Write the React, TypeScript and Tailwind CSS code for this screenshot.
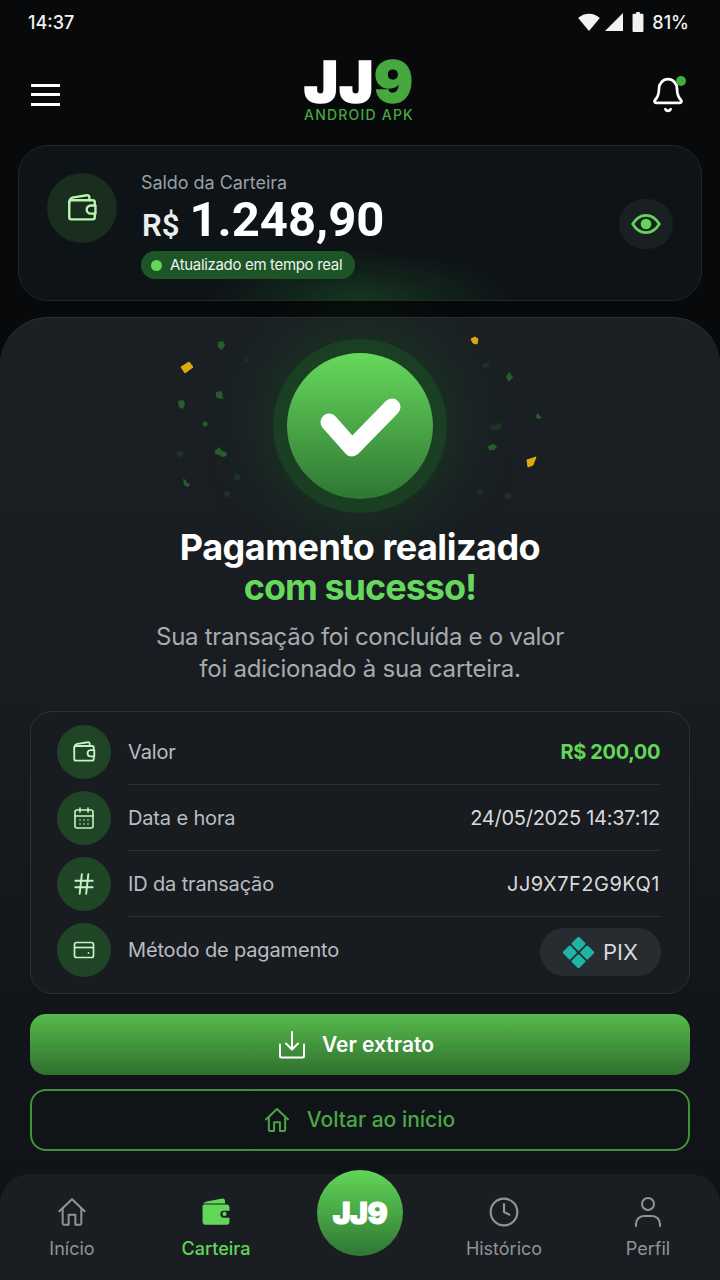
import { Bell, CalendarDays, Clock, Hash } from "lucide-react";
import type { ReactNode } from "react";

const WalletIcon = ({ className, filled }: { className: string; filled?: boolean }) => (
  <svg viewBox="0 0 24 24" className={className} fill="none" stroke="currentColor" strokeWidth={1.7} strokeLinejoin="round" strokeLinecap="round">
    {filled ? (
      <>
        <path d="M3 7C3 5.600 4 5 5.500 4.600L16.500 2.400c1-.1 1.700.4 1.800 1.400l.2 2.200H3z" fill="currentColor" stroke="none" />
        <path d="M2.500 8c0-.8.6-1.300 1.400-1.300h15.700c1 0 1.900.8 1.900 1.900v2.600h-4a2.400 2.400 0 0 0 0 4.800h4v3.100c0 1-.9 1.900-1.900 1.900H4.400c-1 0-1.900-.9-1.900-1.900z" fill="currentColor" stroke="none" />
        <circle cx="18" cy="13.400" r="1.500" fill="currentColor" stroke="none" />
      </>
    ) : (
      <>
        <path d="M3 8v10.500c0 1 .6 1.500 1.500 1.500h15c1 0 1.500-.6 1.500-1.500V16" />
        <path d="M3 8c0-1 .6-1.500 1.500-1.500h15c1 0 1.500.6 1.500 1.500v2.200" />
        <path d="M3.400 6.400C4 5 5 4.800 6 4.500L15.500 3c1-.2 1.700.4 1.700 1.400v2" />
        <path d="M21.500 10.200h-3.300a2.900 2.900 0 0 0 0 5.800h3.300z" />
      </>
    )}
  </svg>
);

const HomeIcon = ({ className, strokeWidth = 1.7 }: { className: string; strokeWidth?: number }) => (
  <svg viewBox="0 0 24 24" className={className} fill="none" stroke="currentColor" strokeWidth={strokeWidth} strokeLinejoin="round" strokeLinecap="round">
    <path d="M2.500 11.500 12 2.500l9.500 9" />
    <path d="M5 9.500V20.500c0 .6.4 1 1 1h3.500v-7.500h5v7.500H18c.6 0 1-.4 1-1V9.500" />
  </svg>
);

const TrayDownIcon = () => (
  <svg viewBox="0 0 28 30" className="h-[30px] w-[28px]" fill="none" stroke="currentColor" strokeWidth={2} strokeLinejoin="round" strokeLinecap="round">
    <path d="M14 2v17" />
    <path d="M8 13.500 14 19.500l6-6" />
    <path d="M2 14.500V26c0 .8.7 1.500 1.500 1.500h21c.8 0 1.500-.7 1.500-1.500V14.500" />
  </svg>
);

const PersonIcon = () => (
  <svg viewBox="0 0 28 32" className="h-[32px] w-[28px]" fill="none" stroke="currentColor" strokeWidth={2} strokeLinecap="round">
    <circle cx="14" cy="8" r="6" />
    <path d="M2 30v-2c0-4.500 3.500-8 8-8h8c4.500 0 8 3.500 8 8v2" />
  </svg>
);

const CardIcon = () => (
  <svg viewBox="0 0 24 24" className="h-[24px] w-[24px]" fill="none" stroke="currentColor" strokeWidth={1.7}>
    <rect x="2.500" y="4.500" width="19" height="15" rx="2" />
    <path d="M2.500 9.500h19" />
    <circle cx="16.500" cy="15" r="0.9" fill="currentColor" stroke="none" />
  </svg>
);

const PixIcon = () => (
  <svg viewBox="0 0 32 32" className="h-[31px] w-[31px]" fill="#1fb5a6">
    <rect x="10.500" y="1.500" width="11" height="11" rx="1.500" transform="rotate(45 16 7)" />
    <rect x="10.500" y="19.500" width="11" height="11" rx="1.500" transform="rotate(45 16 25)" />
    <rect x="1.500" y="10.500" width="11" height="11" rx="1.500" transform="rotate(45 7 16)" />
    <rect x="19.500" y="10.500" width="11" height="11" rx="1.500" transform="rotate(45 25 16)" />
  </svg>
);

// coordinates are page pixels, hence the viewBox offset
const Confetti = () => (
  <svg viewBox="0 317 720 200" className="absolute left-0 top-0 h-[200px] w-[720px]">
    <g fill="#e0a90f" strokeLinejoin="round" stroke="#e0a90f" strokeWidth={1}>
      <path d="M181 366l8-5 4 5-8 6z" />
      <path d="M471 338l4-2 3 2-1 5-4-1z" />
      <path d="M527 459l9-3-3 8-5 2z" />
    </g>
    <g fill="#2f8a32" opacity="0.6" className="blur-[0.7px]">
      <path d="M218 341l5-1 2 4-3 5-4-3z" />
      <path d="M216 391l5-1 2 4-1 2 3 1-5 1-4-2z" />
      <path d="M178 400l5-1 2 4-2 5-4-2z" />
      <circle cx="205" cy="423" r="2.500" />
      <path d="M215 450l4-4 3 4 4 1 1 4-5 1-3-2-4-1z" />
      <path d="M183 478l3 1 1 3 3 1-2 3-4-2z" />
      <path d="M509 371l4 5-4 5-3-5z" />
      <path d="M537 412l5 5-3 1-3-1z" />
      <path d="M488 445l6-2 3 3-3 3-5 0z" />
    </g>
    <g fill="#2f8a32" opacity="0.25" className="blur-[1px]">
      <path d="M490 425l8-1 2-4 1 6-3 3-7-1z" />
      <path d="M481 365l7-3 2 1-4 4z" />
      <circle cx="227" cy="493" r="3" />
      <circle cx="237" cy="476" r="3" />
      <circle cx="180" cy="453" r="3" />
      <circle cx="247" cy="359" r="2" />
      <circle cx="508" cy="495" r="3" />
      <circle cx="480" cy="491" r="2.500" />
    </g>
  </svg>
);

const Row = ({ icon, label, children, last }: { icon: ReactNode; label: string; children: ReactNode; last?: boolean }) => (
  <div className="flex h-[66px] items-center">
    <div className="flex h-[54px] w-[54px] shrink-0 items-center justify-center rounded-full bg-[#1f4426] text-[#c9f2c4]">{icon}</div>
    <div className={`ml-[17px] flex h-full flex-1 items-center justify-between ${last ? "" : "border-b border-[#2c3136]"}`}>
      <span className="text-[20px] tracking-[-0.15px] text-[#b9bdc0]">{label}</span>
      {children}
    </div>
  </div>
);

const NavItem = ({ icon, label, active }: { icon: ReactNode; label: string; active?: boolean }) => (
  <div className={`flex flex-col items-center pt-[19px] ${active ? "text-[#62d658]" : "text-[#8f9497]"}`}>
    <div className="flex h-[38px] items-center">{icon}</div>
    <span className={`mt-[6px] text-[18px] leading-[24px] ${active ? "font-medium" : ""}`}>{label}</span>
  </div>
);

export default function App() {
  return (
    <div className="flex h-[1280px] w-[720px] flex-col overflow-hidden bg-[#07090b] font-['Inter',sans-serif] text-white">
      {/* status bar */}
      <div className="flex h-[44px] shrink-0 items-center justify-between pl-[28px] pr-[31px] text-[18px] font-medium text-[#f2f2f2]">
        <span>14:37</span>
        <div className="flex items-center gap-[5px]">
          <svg viewBox="0 0 24 20" className="h-[18px] w-[22px]" fill="currentColor">
            <path d="M0 5.500C6.800-.8 17.200-.8 24 5.500L12 20z" />
          </svg>
          <svg viewBox="0 0 20 20" className="h-[18px] w-[18px]" fill="currentColor">
            <path d="M20 0v20H0z" />
          </svg>
          <svg viewBox="0 0 12 22" className="ml-[4px] h-[20px] w-[12px]" fill="currentColor">
            <path d="M4 0h4v2h3a1 1 0 0 1 1 1v18a1 1 0 0 1-1 1H1a1 1 0 0 1-1-1V3a1 1 0 0 1 1-1h3z" />
          </svg>
          <span className="ml-[3px]">81%</span>
        </div>
      </div>

      {/* header */}
      <div className="flex h-[101px] shrink-0 items-center justify-between pl-[31px] pr-[36px]">
        <div className="flex w-[29px] flex-col gap-[6.5px]">
          <span className="h-[3px] bg-white" />
          <span className="h-[3px] bg-white" />
          <span className="h-[3px] bg-white" />
        </div>
        <div className="ml-[6px] flex flex-col items-center">
          <div className="-mt-[8px] text-[57px] font-black leading-[50px] tracking-[1.200px] [-webkit-text-stroke:1.5px_currentColor]">
            JJ<span className="text-[#46a83f]">9</span>
          </div>
          <div className="-mt-[1px] text-[14px] font-medium leading-[18px] tracking-[1.2px] text-[#46a83f]">ANDROID APK</div>
        </div>
        <div className="relative h-[32px] w-[32px]">
          <Bell className="-mx-[2px] -my-[3px] h-[38px] w-[36px]" preserveAspectRatio="none" strokeWidth={1.8} />
          <span className="absolute -right-[2px] -top-[3px] h-[10px] w-[10px] rounded-full bg-[#3fae3c]" />
        </div>
      </div>

      {/* balance */}
      <div className="mx-[18px] flex h-[156px] shrink-0 items-start rounded-[30px] border border-[#1c2a22] bg-[#0e1317] bg-[radial-gradient(ellipse_150px_50px_at_50%_100%,rgba(50,160,60,0.24),transparent)] pl-[28px] pr-[28px] pt-[27px]">
        <div className="flex h-[70px] w-[70px] items-center justify-center rounded-full bg-[#1a2e20] text-[#b9f5b0]">
          <WalletIcon className="h-[34px] w-[34px]" />
        </div>
        <div className="ml-[24px] flex-1">
          <div className="mt-[-2px] text-[18px] leading-[24px] tracking-[-0.05px] text-[#9a9fa2]">Saldo da Carteira</div>
          <div className="-mt-[1px] flex items-baseline gap-[10px] font-['Roboto',sans-serif] leading-[52px]">
            <span className="ml-[1px] text-[31px] font-semibold text-[#eceeee]">R$</span>
            <span className="text-[49px] font-bold">1.248,90</span>
          </div>
          <div className="-mt-[1px] flex h-[28px] w-[214px] items-center rounded-full bg-[#1d5527] pl-[10px]">
            <span className="h-[11px] w-[11px] rounded-full bg-[#62d658]" />
            <span className="ml-[8px] text-[15px] tracking-[-0.33px] text-[#eef3ee]">Atualizado em tempo real</span>
          </div>
        </div>
        <div className="mt-[26px] flex h-[50px] w-[54px] items-center justify-center rounded-full bg-[#1a2022] text-[#62d658]">
          <svg viewBox="0 0 24 24" className="h-[32px] w-[32px]" fill="none" stroke="currentColor" strokeWidth={2}>
            <path d="M2 12c2.600-4.200 6-6.500 10-6.500s7.400 2.300 10 6.500c-2.600 4.200-6 6.500-10 6.500S4.600 16.200 2 12z" />
            <circle cx="12" cy="12" r="3" fill="currentColor" />
          </svg>
        </div>
      </div>

      {/* main sheet */}
      <div className="relative mt-[16px] flex flex-1 flex-col rounded-t-[48px] border-t border-[#2a3034] bg-[#1b2024] bg-[linear-gradient(180deg,#1b2024_0%,#181c20_40%,#11151a_75%,#0f1317_100%)]">
        <Confetti />
        <div className="relative flex flex-col items-center pt-[35px]">
          <div className="flex h-[146px] w-[146px] items-center justify-center rounded-full bg-[linear-gradient(180deg,#66d95c_0%,#2f7632_100%)] shadow-[0_0_0_14px_rgba(25,110,35,0.3),0_0_60px_30px_rgba(30,125,45,0.2)]">
            <svg viewBox="0 0 80 64" className="h-[64px] w-[80px] overflow-visible" fill="none" stroke="white" strokeWidth={17} strokeLinecap="round" strokeLinejoin="round">
              <path d="M9 28l23 26L72 13" />
            </svg>
          </div>
          <h1 className="mt-[28px] text-[36px] font-bold leading-[40px] tracking-[-0.5px]">Pagamento realizado</h1>
          <div className="text-[36px] font-bold leading-[40px] tracking-[-1px] text-[#66d95c]">com sucesso!</div>
          <p className="mt-[14px] text-center text-[24px] leading-[32px] tracking-[-0.3px] text-[#a6abae]">
            Sua transação foi concluída e o valor
            <br />
            <span className="tracking-[-0.2px]">foi adicionado à sua carteira.</span>
          </p>
        </div>

        <div className="mx-[30px] mt-[26px] h-[283px] rounded-[22px] border border-[#2b3034] bg-[#181c20] pl-[26px] pr-[29px] pt-[7px]">
          <Row icon={<WalletIcon className="h-[26px] w-[26px]" />} label="Valor">
            <span className="text-[20px] font-bold tracking-[-0.4px] text-[#62d658]">R$ 200,00</span>
          </Row>
          <Row icon={<CalendarDays className="h-[24px] w-[24px]" strokeWidth={1.6} />} label="Data e hora">
            <span className="text-[20px] tracking-[-0.26px] text-[#d8dadb]">24/05/2025 14:37:12</span>
          </Row>
          <Row icon={<Hash className="h-[26px] w-[26px]" strokeWidth={1.8} />} label="ID da transação">
            <span className="text-[20px] tracking-[0.5px] text-[#d8dadb]">JJ9X7F2G9KQ1</span>
          </Row>
          <Row icon={<CardIcon />} label="Método de pagamento" last>
            <div className="-mr-[1px] mt-[4px] flex h-[48px] w-[121px] items-center justify-center gap-[9px] rounded-full bg-[#272c30]">
              <PixIcon />
              <span className="text-[22px] text-[#d8dadb]">PIX</span>
            </div>
          </Row>
        </div>

        <div className="mx-[30px] mt-[20px] flex h-[61px] items-center justify-center gap-[16px] rounded-[16px] bg-[linear-gradient(180deg,#57bb4c_0%,#2f6f2e_100%)] pr-[8px]">
          <TrayDownIcon />
          <span className="text-[21px] font-semibold">Ver extrato</span>
        </div>
        <div className="mx-[30px] mt-[14px] flex h-[62px] items-center justify-center gap-[16px] rounded-[16px] border-2 border-[#3f9339] pr-[2px] text-[#4aa844]">
          <HomeIcon className="h-[28px] w-[28px]" />
          <span className="text-[21px] font-medium">Voltar ao início</span>
        </div>

        {/* bottom nav */}
        <div className="mt-auto grid h-[106px] grid-cols-5 rounded-t-[30px] bg-[#1a1e22]">
          <NavItem icon={<HomeIcon className="h-[32px] w-[32px]" strokeWidth={1.5} />} label="Início" />
          <NavItem icon={<WalletIcon className="h-[34px] w-[34px]" filled />} label="Carteira" active />
          <div className="flex justify-center">
            <div className="-mt-[4px] flex h-[86px] w-[86px] items-center justify-center rounded-full bg-[linear-gradient(180deg,#62d658_0%,#2f7632_100%)]">
              <span className="text-[30px] font-black tracking-[-0.5px] [-webkit-text-stroke:1px_currentColor]">JJ9</span>
            </div>
          </div>
          <NavItem icon={<Clock className="h-[32px] w-[32px]" strokeWidth={1.6} />} label="Histórico" />
          <NavItem icon={<PersonIcon />} label="Perfil" />
        </div>
      </div>
    </div>
  );
}
